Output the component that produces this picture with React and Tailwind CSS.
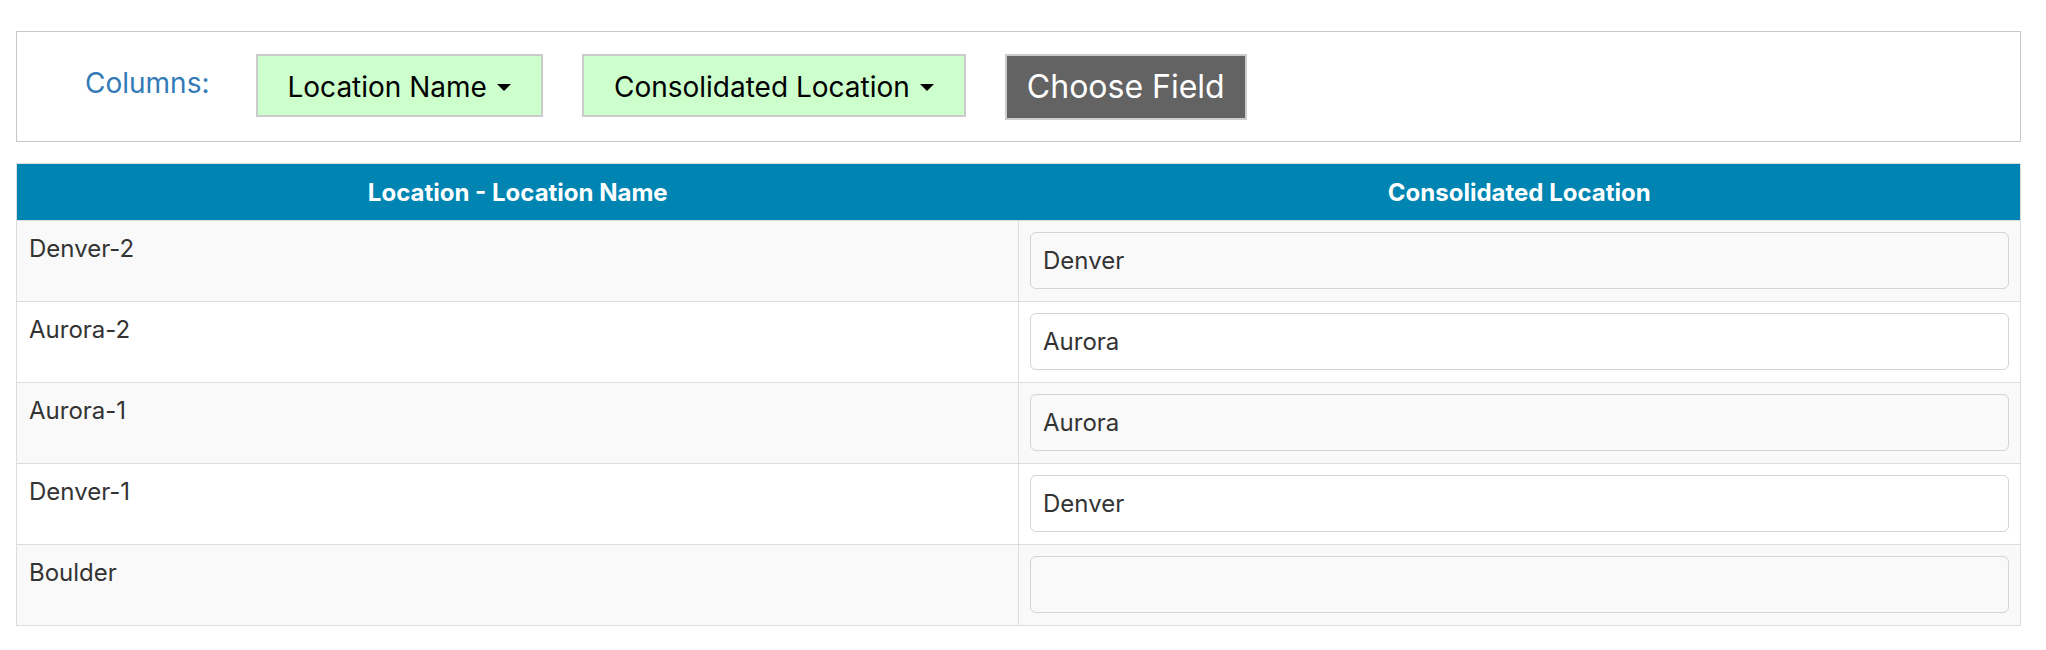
import { useState } from 'react';

const rows = [
  { name: 'Denver-2', value: 'Denver' },
  { name: 'Aurora-2', value: 'Aurora' },
  { name: 'Aurora-1', value: 'Aurora' },
  { name: 'Denver-1', value: 'Denver' },
  { name: 'Boulder', value: '' }
];

function Caret() {
  return (
    <span className="ml-[10px] inline-block h-0 w-0 border-x-[7px] border-t-[7px] border-x-transparent border-t-black align-middle" />
  );
}

function ColumnButton({ label }) {
  return (
    <button className="flex h-[63px] items-center border-2 border-[#cccccc] bg-[#ccffcc] px-[30px] pt-[3px] text-[28px] leading-[34px] text-black">
      {label}
      <Caret />
    </button>
  );
}

export default function App() {
  const [values, setValues] = useState(rows.map((row) => row.value));

  return (
    <div className="min-h-screen bg-white pl-[16px] pr-[25px] pt-[31px] font-['Inter',sans-serif]">
      <div className="flex items-start border border-[#c8c8c8] pb-[21px] pt-[22px]">
        <span className="ml-[68px] mr-[46px] pt-[12px] text-[28px] leading-[34px] text-[#337ab7]">Columns:</span>
        <div className="flex items-start gap-[39px]">
          <ColumnButton label="Location Name" />
          <ColumnButton label="Consolidated Location" />
          <button className="flex h-[66px] items-center border-2 border-[#cccccc] bg-[#636363] px-[20px] text-[32px] leading-[40px] text-white">
            Choose Field
          </button>
        </div>
      </div>

      <table className="mt-[21px] w-full border-collapse border border-[#dddddd]">
        <thead>
          <tr className="bg-[#0085b3]">
            <th className="h-[57px] w-1/2 pt-px text-center text-[24px] font-bold text-white">Location - Location Name</th>
            <th className="h-[57px] w-1/2 pt-px text-center text-[24px] font-bold text-white">Consolidated Location</th>
          </tr>
        </thead>
        <tbody>
          {rows.map((row, index) => (
            <tr key={row.name} className={index % 2 === 0 ? 'bg-[#f9f9f9]' : 'bg-white'}>
              <td className="border-t border-[#dddddd] px-[12px] pt-[11px] align-top text-[24px] leading-[34px] text-[#333333]">
                {row.name}
              </td>
              <td className="border-l border-t border-[#dddddd] px-[11px] pb-[12px] pt-[11px]">
                <input
                  value={values[index]}
                  onChange={(e) => setValues(values.map((v, i) => (i === index ? e.target.value : v)))}
                  className="block h-[57px] w-full rounded-[6px] border border-[#d4d4d4] bg-transparent px-[12px] text-[24px] text-[#333333] outline-none"
                />
              </td>
            </tr>
          ))}
        </tbody>
      </table>
    </div>
  );
}
